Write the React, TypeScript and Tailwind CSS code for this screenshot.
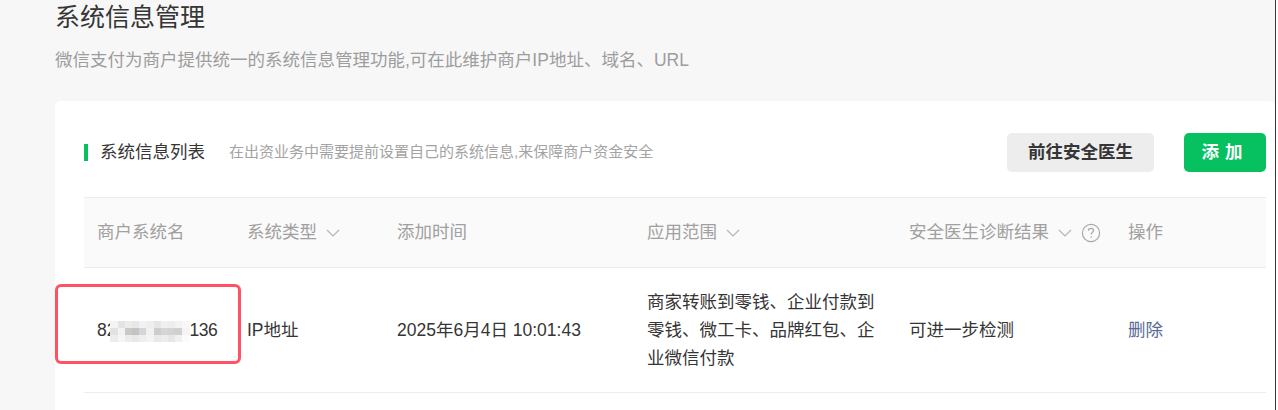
import React from 'react';

const font = { fontFamily: '"Liberation Sans", "Noto Sans CJK SC", sans-serif' };

const mosaic = [
  ['#f4f4f4', '#e4e4e4', '#ececec', '#e8e8e8', '#f2f2f2', '#eeeeee', '#e6e6e6', '#f0f0f0', '#ededed', '#f3f3f3', '#f8f8f8'],
  ['#e2e2e2', '#f2f2f2', '#c9c9c9', '#c6c2c2', '#d2d6dc', '#f1f1f1', '#cdcdcd', '#d6d6d6', '#d3d3d3', '#cfcfcf', '#f4f4f4'],
  ['#ececec', '#f5f5f5', '#ececec', '#e8e8e8', '#eeeeee', '#f3f3f3', '#e9e9e9', '#ededed', '#e6e6e6', '#f0f0f0', '#fbfbfb'],
];

function Chevron() {
  return (
    <svg width="16" height="10" viewBox="0 0 16 10" className="ml-[8px] inline-block">
      <path d="M2 2 L8 8 L14 2" fill="none" stroke="#b5b5b5" strokeWidth="1.2" />
    </svg>
  );
}

function HelpIcon() {
  return (
    <svg width="20" height="20" viewBox="0 0 20 20" className="ml-[8px] inline-block">
      <circle cx="10" cy="10" r="8.6" fill="none" stroke="#a8a8a8" strokeWidth="1.2" />
      <path
        d="M7.4 7.8 C7.4 6.2 8.6 5.4 10 5.4 C11.5 5.4 12.6 6.3 12.6 7.6 C12.6 9.2 10.2 9.5 10.2 11.4"
        fill="none"
        stroke="#a8a8a8"
        strokeWidth="1.2"
      />
      <circle cx="10.2" cy="14" r="0.8" fill="#a8a8a8" />
    </svg>
  );
}

function Masked() {
  return (
    <span className="inline-flex flex-col align-middle">
      {mosaic.map((row, i) => (
        <span key={i} className="flex">
          {row.map((c, j) => (
            <span key={j} className="block h-[7px] w-[7.2px]" style={{ backgroundColor: c }} />
          ))}
        </span>
      ))}
    </span>
  );
}

export default function App() {
  const cols = 'grid grid-cols-[150px_150px_250px_262px_219px_1fr]';

  return (
    <div className="relative flex h-[410px] w-full overflow-hidden bg-[#f7f7f7]" style={font}>
      <div className="flex-1 pl-[55px]">
        <h1 className="text-[25px] leading-[34px] text-[#353535]">系统信息管理</h1>
        <p className="mt-[14px] text-[17.5px] leading-[24px] text-[#9d9d9d]">
          微信支付为商户提供统一的系统信息管理功能,可在此维护商户IP地址、域名、URL
        </p>

        <div className="mt-[29px] h-[320px] rounded-t-[6px] bg-white pl-[29px] pr-[9px] pt-[32px]">
          <div className="flex h-[39px] items-center">
            <span className="h-[17px] w-[4px] bg-[#07c160]" />
            <span className="ml-[12px] text-[17.5px] text-[#353535]">系统信息列表</span>
            <span className="ml-[24px] text-[15px] text-[#a3a3a3]">
              在出资业务中需要提前设置自己的系统信息,来保障商户资金安全
            </span>
            <div className="ml-auto flex items-center gap-[30px]">
              <button className="h-[39px] w-[147px] rounded-[5px] bg-[#ededed] text-[17.5px] font-bold text-[#353535]">
                前往安全医生
              </button>
              <button className="h-[39px] w-[82px] rounded-[5px] bg-[#07c160] text-[17.5px] font-bold tracking-[6px] text-white">
                添加
              </button>
            </div>
          </div>

          <div className="mt-[25px]">
            <div
              className={`${cols} h-[71px] items-center border-y border-[#ececec] bg-[#fafafa] text-[17.5px] text-[#a0a0a0]`}
            >
              <div className="pl-[13px]">商户系统名</div>
              <div className="flex items-center pl-[13px]">
                系统类型
                <Chevron />
              </div>
              <div className="pl-[13px]">添加时间</div>
              <div className="flex items-center pl-[13px]">
                应用范围
                <Chevron />
              </div>
              <div className="flex items-center pl-[13px]">
                安全医生诊断结果
                <Chevron />
                <HelpIcon />
              </div>
              <div className="pl-[13px]">操作</div>
            </div>

            <div
              className={`${cols} h-[125px] items-center border-b border-[#ececec] text-[17.5px] text-[#353535]`}
            >
              <div className="flex items-center pl-[13px]">
                <span>82</span>
                <span className="-ml-[6px]">
                  <Masked />
                </span>
                <span className="tracking-[-0.5px]">136</span>
              </div>
              <div className="pl-[13px]">IP地址</div>
              <div className="pl-[13px]">2025年6月4日 10:01:43</div>
              <div className="pl-[13px] pr-[13px] leading-[28px]">
                商家转账到零钱、企业付款到零钱、微工卡、品牌红包、企业微信付款
              </div>
              <div className="pl-[13px]">可进一步检测</div>
              <div className="pl-[13px] text-[#576b95]">删除</div>
            </div>
          </div>
        </div>
      </div>
      <div className="w-[1px] bg-[#3a3a3a]" />
      <div className="w-[2px] bg-white" />

      <div className="absolute left-[55px] top-[284px] h-[80px] w-[186px] rounded-[6px] border-[3px] border-[#ff5365]" />
    </div>
  );
}
